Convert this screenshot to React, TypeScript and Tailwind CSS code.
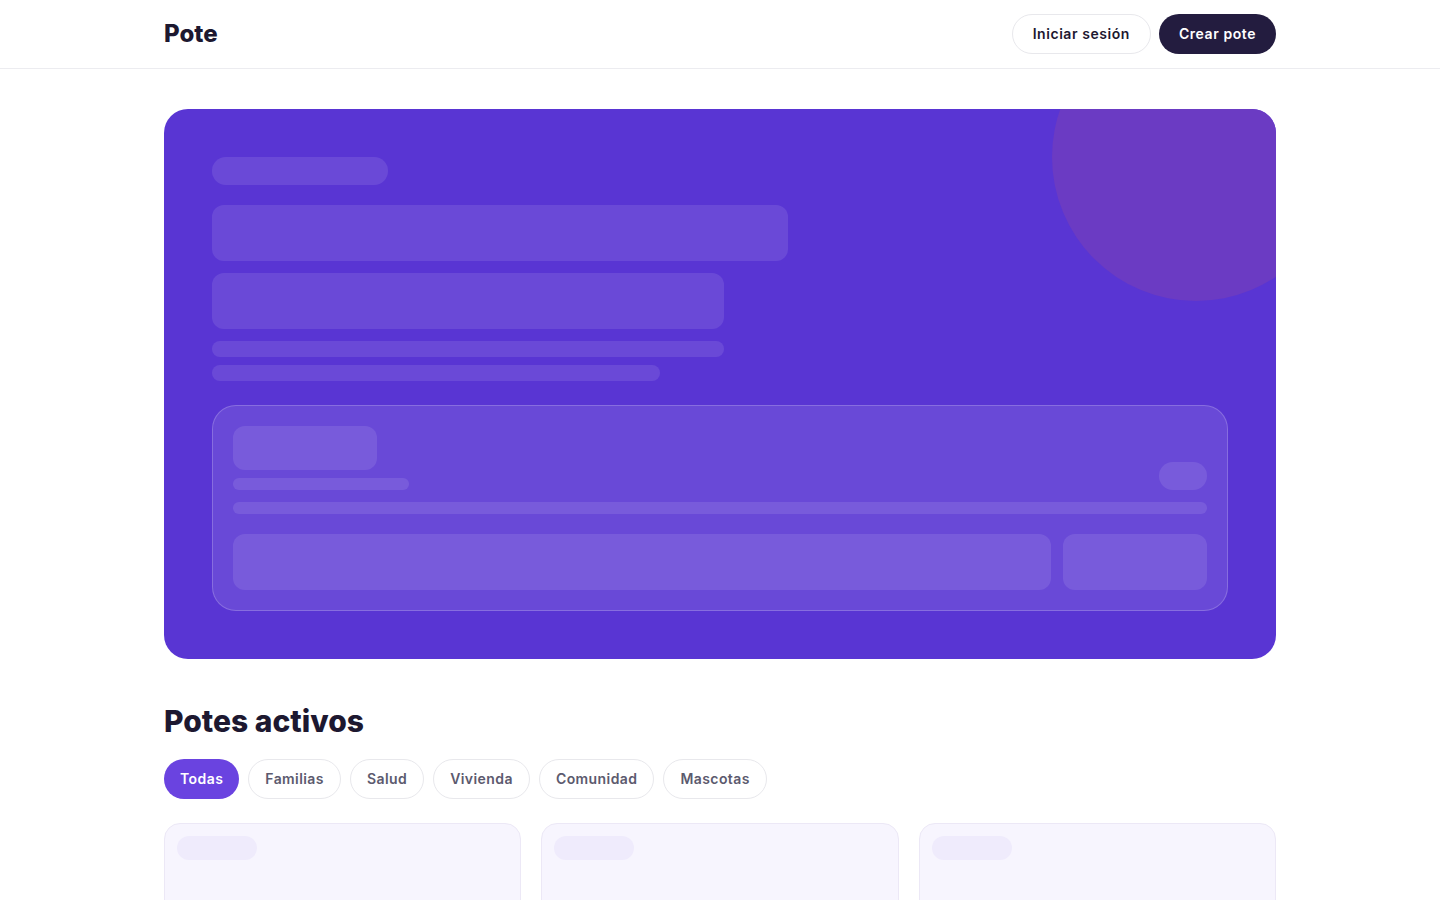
const categories = ["Todas", "Familias", "Salud", "Vivienda", "Comunidad", "Mascotas"];

function HeroSkeleton() {
  return (
    <section className="relative overflow-hidden rounded-3xl bg-[#5935d3] p-12">
      {/* Decorative circle */}
      <div className="absolute -right-16 -top-24 h-72 w-72 rounded-full bg-[#6b3bc3]" />

      <div className="relative flex flex-col">
        <div className="h-7 w-44 rounded-full bg-white/10" />
        <div className="mt-5 h-14 w-[576px] rounded-xl bg-white/10" />
        <div className="mt-3 h-14 w-[512px] rounded-xl bg-white/10" />
        <div className="mt-3 h-4 w-[512px] rounded-full bg-white/10" />
        <div className="mt-2 h-4 w-[448px] rounded-full bg-white/10" />

        {/* Progress card */}
        <div className="mt-6 rounded-3xl border border-white/20 bg-white/10 p-5">
          <div className="flex items-end justify-between">
            <div className="flex flex-col gap-2">
              <div className="h-11 w-36 rounded-xl bg-white/10" />
              <div className="h-3 w-44 rounded-full bg-white/10" />
            </div>
            <div className="h-7 w-12 rounded-full bg-white/10" />
          </div>
          <div className="mt-3 h-3 w-full rounded-full bg-white/10" />
          <div className="mt-5 flex gap-3">
            <div className="h-14 flex-1 rounded-xl bg-white/10" />
            <div className="h-14 w-36 rounded-xl bg-white/10" />
          </div>
        </div>
      </div>
    </section>
  );
}

function CardSkeleton() {
  return (
    <div className="h-[200px] rounded-2xl border border-[#ece8f6] bg-[#f7f5fe] p-3">
      <div className="h-6 w-20 rounded-full bg-[#efebfc]" />
    </div>
  );
}

export default function App() {
  return (
    <div className="min-h-screen bg-white font-['Inter',sans-serif] text-[#1d1830]">
      {/* Header */}
      <header className="border-b border-[#ececf0]">
        <div className="mx-auto flex h-[68px] max-w-6xl items-center justify-between px-5">
          <span className="text-2xl font-extrabold text-[#1d1830]">Pote</span>
          <div className="flex items-center gap-2">
            <button className="h-10 rounded-full border border-[#e8e8ec] bg-white px-5 text-sm font-semibold tracking-[0.04em] text-[#1d1830]">
              Iniciar sesión
            </button>
            <button className="h-10 rounded-full bg-[#231c3f] px-5 text-sm font-semibold tracking-[0.04em] text-white">
              Crear pote
            </button>
          </div>
        </div>
      </header>

      <main className="mx-auto max-w-6xl px-5 pt-10">
        <HeroSkeleton />

        {/* Active potes */}
        <section className="mt-11">
          <h2 className="text-[30px] font-extrabold leading-9 text-[#1d1830]">Potes activos</h2>
          <div className="mt-5 flex gap-[9px]">
            {categories.map((c, i) => (
              <button
                key={c}
                className={
                  i === 0
                    ? "h-10 rounded-full bg-[#6a43e0] px-4 text-sm font-semibold tracking-[0.03em] text-white"
                    : "h-10 rounded-full border border-[#e8e8ec] bg-white px-4 text-sm font-semibold tracking-[0.03em] text-[#5c5a6e]"
                }
              >
                {c}
              </button>
            ))}
          </div>
          <div className="mt-6 grid grid-cols-3 gap-5">
            <CardSkeleton />
            <CardSkeleton />
            <CardSkeleton />
          </div>
        </section>
      </main>
    </div>
  );
}
